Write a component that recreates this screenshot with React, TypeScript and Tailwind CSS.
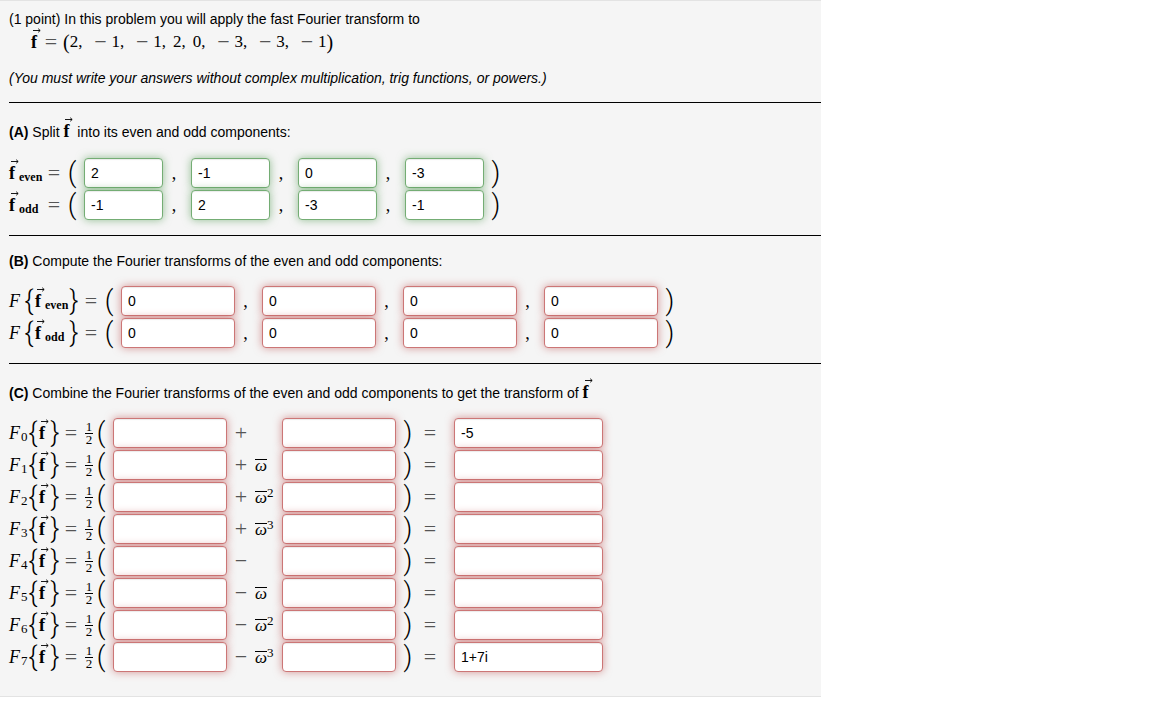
import { useState } from "react";
import clsx from "clsx";

type Status = "correct" | "incorrect";

const vector = [2, -1, -1, 2, 0, -3, -3, -1];

const splitRows = [
  { name: "even", values: ["2", "-1", "0", "-3"] },
  { name: "odd", values: ["-1", "2", "-3", "-1"] },
];

const transformRows = [
  { name: "even", values: ["0", "0", "0", "0"] },
  { name: "odd", values: ["0", "0", "0", "0"] },
];

const combineRows = [
  { sign: "+", power: 0, result: "-5" },
  { sign: "+", power: 1, result: "" },
  { sign: "+", power: 2, result: "" },
  { sign: "+", power: 3, result: "" },
  { sign: "−", power: 0, result: "" },
  { sign: "−", power: 1, result: "" },
  { sign: "−", power: 2, result: "" },
  { sign: "−", power: 3, result: "1+7i" },
];

const serif = "font-['Liberation_Serif',serif]";

function Answer({
  label,
  initial = "",
  status,
  className,
}: {
  label: string;
  initial?: string;
  status: Status;
  className: string;
}) {
  const [value, setValue] = useState(initial);
  return (
    <input
      type="text"
      aria-label={label}
      value={value}
      onChange={(e) => setValue(e.target.value)}
      className={clsx(
        "h-[30px] shrink-0 rounded border bg-white px-1.5 text-sm text-black outline-none",
        status === "correct"
          ? "border-[#74ad74] shadow-[inset_0_1px_1px_rgba(0,0,0,0.08),0_0_8px_rgba(81,153,81,0.6)]"
          : "border-[#cc7676] shadow-[inset_0_1px_1px_rgba(0,0,0,0.08),0_0_8px_rgba(191,84,84,0.6)]",
        className
      )}
    />
  );
}

// bold f with a vector arrow on top
function VecF() {
  return (
    <span className={`relative inline-block w-2.5 text-lg leading-5 font-bold ${serif}`}>
      f
      <svg
        viewBox="0 0 8 5"
        className="absolute -top-1 left-0.5 h-[5px] w-2"
        fill="none"
        stroke="currentColor"
        strokeWidth="0.9"
      >
        <path d="M0 2.5H7M5.2 0.7L7.2 2.5L5.2 4.3" />
      </svg>
    </span>
  );
}

function Delim({ children }: { children: string }) {
  return (
    <span className="flex w-2 shrink-0 justify-center font-['Roboto',sans-serif] text-[27px] leading-8 font-light">
      {children}
    </span>
  );
}

function Sign({ children }: { children: string }) {
  return (
    <span className={`flex w-3 shrink-0 justify-center text-[22px] leading-8 text-[#555] ${serif}`}>
      {children}
    </span>
  );
}

function ScriptF() {
  return <span className={`w-3 shrink-0 text-lg leading-5 italic ${serif}`}>F</span>;
}

function Named({ name }: { name: string }) {
  return (
    <span className="flex items-end">
      <VecF />
      <span className={`text-xs leading-3 font-bold ${serif}`}>{name}</span>
    </span>
  );
}

function Tuple({
  label,
  values,
  status,
  input,
  comma,
}: {
  label: string;
  values: string[];
  status: Status;
  input: string;
  comma: string;
}) {
  return (
    <>
      <Delim>(</Delim>
      {values.map((v, i) => (
        <span key={i} className="flex items-center">
          {i > 0 && <span className={clsx("pr-1.5 text-center text-lg", serif, comma)}>,</span>}
          <Answer
            label={`${label} ${i + 1}`}
            initial={v}
            status={status}
            className={clsx(input, i === 0 && "ml-2")}
          />
        </span>
      ))}
      <span className="ml-2">
        <Delim>)</Delim>
      </span>
    </>
  );
}

export default function App() {
  return (
    <div className="min-h-screen bg-white font-['Liberation_Sans',Arial,sans-serif] text-sm text-black">
      <main className="w-[71.25%] overflow-x-clip border-y border-[#e3e3e3] bg-[#f5f5f5] pt-2 pb-[23px] pl-[9px]">
        <p className="leading-5">
          (1 point) In this problem you will apply the fast Fourier transform to
        </p>
        <div className={`flex h-[26px] items-center pl-[22px] text-[17px] ${serif}`}>
          <VecF />
          <span className="mr-1.5 ml-1">
            <Sign>=</Sign>
          </span>
          <span className="text-xl">(</span>
          {vector.map((n, i) => (
            <span key={i} className={clsx("flex items-center", i > 0 && (n < 0 ? "pl-3" : "pl-[7px]"))}>
              {n < 0 && (
                <span className="mr-[5px]">
                  <Sign>−</Sign>
                </span>
              )}
              {Math.abs(n)}
              {i < vector.length - 1 && ","}
            </span>
          ))}
          <span className="text-xl">)</span>
        </div>
        <p className="mt-[13px] mb-3.5 leading-5 italic">
          (You must write your answers without complex multiplication, trig functions, or powers.)
        </p>

        <section className="border-t border-black pt-[18px] pb-3.5">
          <h2 className="mb-[15px] leading-5">
            <b>(A)</b> Split <VecF /> into its even and odd components:
          </h2>
          {splitRows.map((row) => (
            <div key={row.name} className="flex h-8 items-center">
              <span className="w-[39px]">
                <Named name={row.name} />
              </span>
              <Sign>=</Sign>
              <span className="ml-2 flex items-center">
                <Tuple
                  label={`f ${row.name}`}
                  values={row.values}
                  status="correct"
                  input="w-[79px]"
                  comma="w-7"
                />
              </span>
            </div>
          ))}
        </section>

        <section className="border-t border-black pt-[15px] pb-3.5">
          <h2 className="mb-3.5 leading-5">
            <b>(B)</b> Compute the Fourier transforms of the even and odd components:
          </h2>
          {transformRows.map((row) => (
            <div key={row.name} className="flex h-8 items-center">
              <span className="flex w-[76px] items-center">
                <ScriptF />
                <span className="ml-1">
                  <Delim>{"{"}</Delim>
                </span>
                <span className="ml-0.5 w-[35px]">
                  <Named name={row.name} />
                </span>
                <Delim>{"}"}</Delim>
              </span>
              <Sign>=</Sign>
              <span className="ml-2 flex items-center">
                <Tuple
                  label={`Transform of f ${row.name}`}
                  values={row.values}
                  status="incorrect"
                  input="w-[114px]"
                  comma="w-[27px]"
                />
              </span>
            </div>
          ))}
        </section>

        <section className="border-t border-black pt-[18px]">
          <h2 className="mb-3.5 leading-5">
            <b>(C)</b> Combine the Fourier transforms of the even and odd components to get the
            transform of <VecF />
          </h2>
          {combineRows.map((row, k) => (
            <div key={k} className="flex h-8 items-center">
              <span className="flex w-14 items-center">
                <ScriptF />
                <sub className={`bottom-0 mt-2 w-2 text-[13px] leading-4 ${serif}`}>{k}</sub>
                <Delim>{"{"}</Delim>
                <span className="mx-0.5">
                  <VecF />
                </span>
                <Delim>{"}"}</Delim>
              </span>
              <Sign>=</Sign>
              <span className={`ml-2 flex w-2 flex-col text-center text-[13px] leading-3 ${serif}`}>
                <span className="border-b border-black">1</span>
                <span>2</span>
              </span>
              <span className="ml-1">
                <Delim>(</Delim>
              </span>
              <Answer label={`F${k} even part`} status="incorrect" className="ml-2 w-[114px]" />
              <span className="ml-2 flex w-[47px] items-center">
                <Sign>{row.sign}</Sign>
                {row.power > 0 && (
                  <span className={`ml-2 flex items-start text-[17px] leading-4 italic ${serif}`}>
                    <span className="flex h-3 w-3 items-center justify-center border-t border-black leading-3">
                      ω
                    </span>
                    {row.power > 1 && (
                      <sup className="-top-1 text-[13px] leading-3 not-italic">{row.power}</sup>
                    )}
                  </span>
                )}
              </span>
              <Answer label={`F${k} odd part`} status="incorrect" className="w-[114px]" />
              <span className="mr-3 ml-2">
                <Delim>)</Delim>
              </span>
              <Sign>=</Sign>
              <Answer
                label={`F${k} result`}
                initial={row.result}
                status="incorrect"
                className="ml-[18px] w-[149px]"
              />
            </div>
          ))}
        </section>
      </main>
    </div>
  );
}
